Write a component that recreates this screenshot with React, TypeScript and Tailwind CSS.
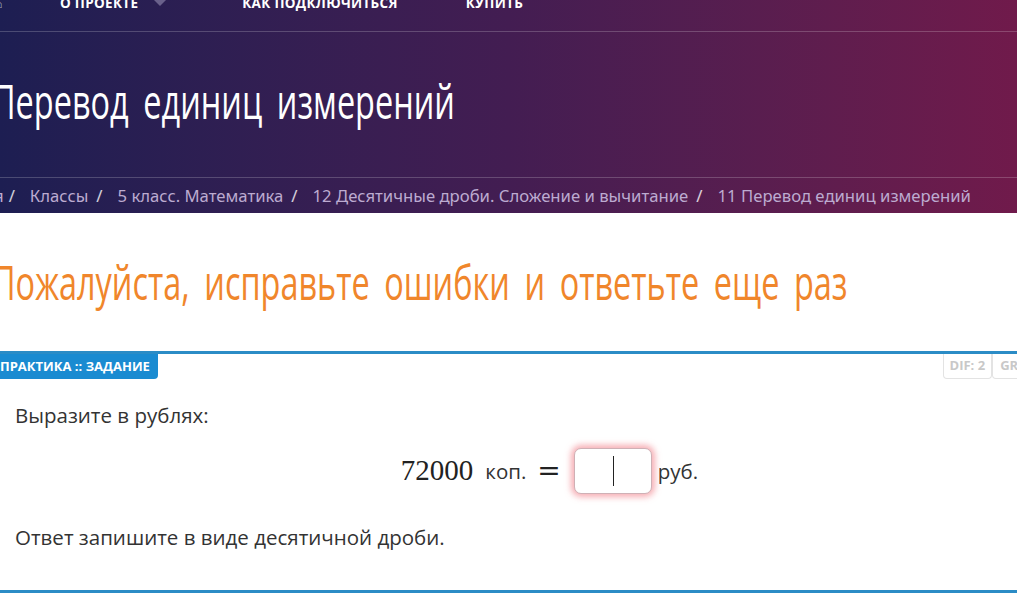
import React from "react";

const sans = { fontFamily: '"Open Sans", "Noto Sans", sans-serif' };
const crumbFont = { fontFamily: '"Noto Sans", "Open Sans", sans-serif' };
const serif = { fontFamily: '"Liberation Serif", serif' };

function Caret() {
  return (
    <svg width="16" height="10" viewBox="0 0 16 10" className="opacity-40">
      <path d="M1 1 L8 8 L15 1 Z" fill="#c9c4e0" />
    </svg>
  );
}

// Headings use a horizontally squeezed face to read as a condensed type.
function Condensed({ children, className }: { children: React.ReactNode; className: string }) {
  return (
    <span
      className={`inline-block whitespace-nowrap origin-left scale-x-[0.683] font-medium text-[47.5px] leading-none [word-spacing:9px] ${className}`}
      style={sans}
    >
      {children}
    </span>
  );
}

export default function App() {
  const crumbs = ["Классы", "5 класс. Математика", "12 Десятичные дроби. Сложение и вычитание", "11 Перевод единиц измерений"];
  const navText = "text-white font-bold text-[13.5px] tracking-[0.3px] leading-[16px]";
  return (
    <div className="w-[1017px] h-[614px] overflow-hidden bg-white" style={sans}>
      {/* page header */}
      <header className="h-[213px] bg-gradient-to-r from-[#1d1e52] via-[#431d52] to-[#701a4b] flex flex-col">
        <nav className="h-[32px] shrink-0 border-b border-white/20 flex items-start">
          <div className="flex items-start -mt-[5px]">
            <span className="w-[12px] -ml-[6px] text-white/60 text-[14px] leading-[16px]">⌂</span>
            <div className="flex items-center ml-[54px] gap-[14px]">
              <span className={navText}>О ПРОЕКТЕ</span>
              <Caret />
            </div>
            <span className={`ml-[74px] ${navText}`}>КАК ПОДКЛЮЧИТЬСЯ</span>
            <span className={`ml-[68px] ${navText}`}>КУПИТЬ</span>
          </div>
        </nav>
        <div className="h-[146px] shrink-0 border-b border-white/20 flex items-center overflow-hidden">
          <h1 className="-ml-[8px] -mt-[8px]">
            <Condensed className="text-white">Перевод единиц измерений</Condensed>
          </h1>
        </div>
        <div className="flex-1 flex items-center text-[16.7px] text-[#bcabd0]" style={crumbFont}>
          <span className="-ml-[62px]">Главная</span>
          {crumbs.map((c, i) => (
            <React.Fragment key={c}>
              <span className={`${i === 0 ? "ml-[5px]" : "ml-[8px]"} mr-[8px] text-white/80`}>/</span>
              <span className="ml-[7px]">{c}</span>
            </React.Fragment>
          ))}
        </div>
      </header>

      {/* notice */}
      <div className="h-[138px] flex items-start pt-[45px] overflow-hidden">
        <h2 className="-ml-[8px]">
          <Condensed className="text-[#f0862b]">Пожалуйста, исправьте ошибки и ответьте еще раз</Condensed>
        </h2>
      </div>

      {/* task card */}
      <section className="border-t-[3px] border-[#2b8cc6]">
        <div className="flex justify-between items-start">
          <div className="-ml-[8px] h-[25px] px-[8px] bg-[#1a8bd1] rounded-br-[4px] flex items-center text-white text-[13px] font-bold">
            ПРАКТИКА :: ЗАДАНИЕ
          </div>
          <div className="flex text-[13px] font-bold text-[#c8c8c8] -mr-[35px]">
            <span className="h-[25px] px-[6px] border border-t-0 border-[#e3e3e3] rounded-b-[4px] flex items-center">DIF: 2</span>
            <span className="h-[25px] px-[7px] border border-t-0 border-[#e3e3e3] rounded-b-[4px] flex items-center">GRADE</span>
          </div>
        </div>
        <div className="px-[15px] text-[#333] text-[20.5px]">
          <p className="mt-[23px] leading-[26px]">Выразите в рублях:</p>
          <div className="mt-[20px] flex items-center justify-center pl-[82px]">
            <span className="text-[29px] text-[#222]" style={serif}>72000</span>
            <span className="ml-[12px]">коп.</span>
            <span className="ml-[11px] text-[28px] text-[#222] leading-none" style={{ fontFamily: '"DejaVu Serif", serif' }}>=</span>
            <span className="ml-[13px] w-[78px] h-[46px] rounded-[7px] border border-[#cfb0b5] bg-white shadow-[0_0_6px_3px_rgba(240,120,130,0.6)] flex items-center justify-center">
              <span className="w-px h-[30px] bg-[#222] ml-[2px]" />
            </span>
            <span className="ml-[6px]">руб.</span>
          </div>
          <p className="mt-[30px] leading-[26px]">Ответ запишите в виде десятичной дроби.</p>
        </div>
        <div className="mt-[40px] border-t-[3px] border-[#2b8cc6]" />
      </section>
    </div>
  );
}
